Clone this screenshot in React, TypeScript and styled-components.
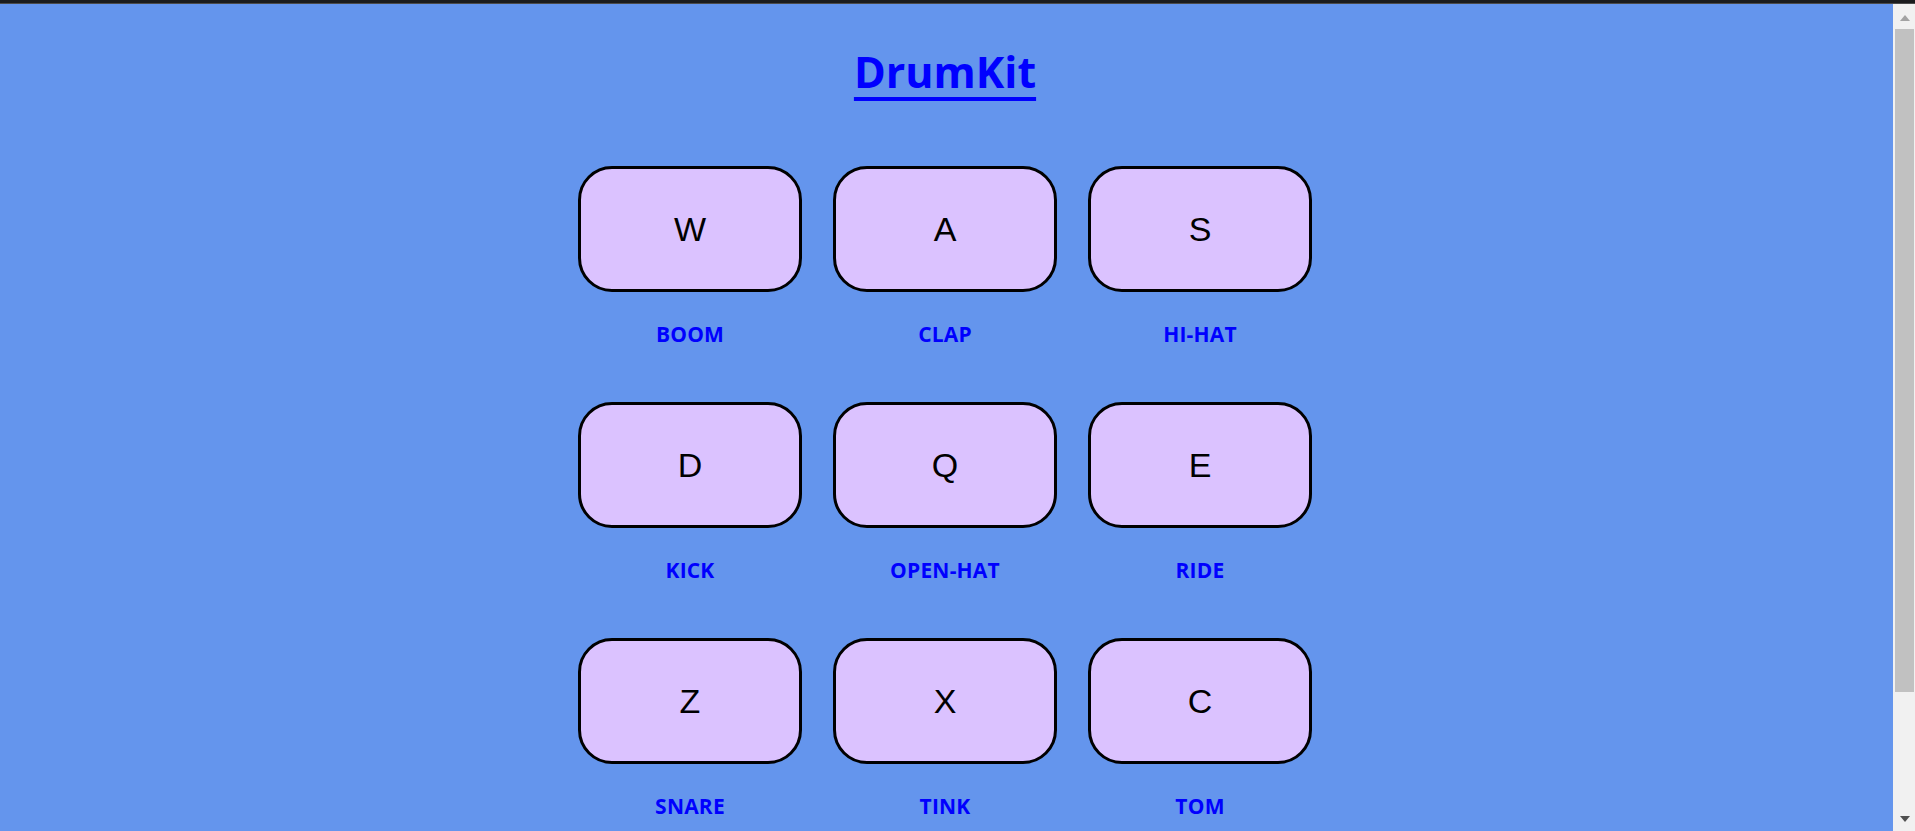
import React from "react";
import styled, { createGlobalStyle } from "styled-components";

const Global = createGlobalStyle`
  html, body { margin: 0; padding: 0; height: 100%; overflow: hidden; }
  body { background: #6495ed; font-family: "Open Sans", "DejaVu Sans", sans-serif; }
  #root { height: 100%; }
`;

const Shell = styled.div`
  display: flex;
  flex-direction: column;
  height: 100vh;
`;

const TopStrip = styled.div`
  flex: 0 0 auto;
  height: 3px;
  background: #1b1c1e;
  border-bottom: 1px solid #4b4b4b;
`;

const Body = styled.div`
  flex: 1 1 auto;
  display: flex;
  min-height: 0;
`;

const Main = styled.main`
  flex: 1 1 auto;
  display: flex;
  flex-direction: column;
  align-items: center;
  overflow: hidden;
  padding-right: 3px;
  background: #6495ed;
`;

const Title = styled.a`
  display: block;
  margin-top: 41px;
  font-family: "Open Sans", sans-serif;
  font-weight: 700;
  font-size: 43px;
  line-height: 54px;
  color: #0000ff;
  text-decoration: underline;
  text-decoration-thickness: 4px;
  text-underline-offset: 9px;
`;

const Grid = styled.div`
  margin-top: 67px;
  display: grid;
  grid-template-columns: repeat(3, 224px);
  column-gap: 31px;
  row-gap: 56px;
`;

const Cell = styled.div`
  display: flex;
  flex-direction: column;
  align-items: center;
`;

const Pad = styled.button`
  box-sizing: border-box;
  width: 224px;
  height: 126px;
  border: 3px solid #000;
  border-radius: 34px;
  background: #dbc2ff;
  display: flex;
  align-items: center;
  justify-content: center;
  font-family: "Liberation Sans", Arial, sans-serif;
  font-size: 34px;
  color: #000;
  padding: 0;
  cursor: pointer;
`;

const Label = styled.span`
  margin-top: 30px;
  font-family: "Open Sans", sans-serif;
  font-weight: 700;
  font-size: 21px;
  line-height: 24px;
  color: #0000ff;
  letter-spacing: 0.2px;
`;

const Scrollbar = styled.div`
  flex: 0 0 22px;
  width: 22px;
  background: #f1f1f1;
  display: flex;
  flex-direction: column;
  align-items: center;
`;

const UpArrow = styled.div`
  margin-top: 11px;
  width: 0;
  height: 0;
  border-left: 5px solid transparent;
  border-right: 5px solid transparent;
  border-bottom: 6px solid #a3a3a3;
  margin-left: 2px;
`;

const Thumb = styled.div`
  margin-top: 8px;
  align-self: stretch;
  margin-left: 2px;
  margin-right: 1px;
  height: 663px;
  background: #c1c1c1;
`;

const Spacer = styled.div`
  flex: 1 1 auto;
`;

const DownArrow = styled.div`
  margin-bottom: 9px;
  width: 0;
  height: 0;
  border-left: 5px solid transparent;
  border-right: 5px solid transparent;
  border-top: 6px solid #505050;
  margin-left: 2px;
`;

const pads = [
  { key: "W", name: "BOOM" },
  { key: "A", name: "CLAP" },
  { key: "S", name: "HI-HAT" },
  { key: "D", name: "KICK" },
  { key: "Q", name: "OPEN-HAT" },
  { key: "E", name: "RIDE" },
  { key: "Z", name: "SNARE" },
  { key: "X", name: "TINK" },
  { key: "C", name: "TOM" },
];

export default function App() {
  return (
    <>
      <Global />
      <Shell>
        <TopStrip />
        <Body>
          <Main>
            <Title href="#">DrumKit</Title>
            <Grid>
              {pads.map((p) => (
                <Cell key={p.key}>
                  <Pad>{p.key}</Pad>
                  <Label>{p.name}</Label>
                </Cell>
              ))}
            </Grid>
          </Main>
          <Scrollbar>
            <UpArrow />
            <Thumb />
            <Spacer />
            <DownArrow />
          </Scrollbar>
        </Body>
      </Shell>
    </>
  );
}
